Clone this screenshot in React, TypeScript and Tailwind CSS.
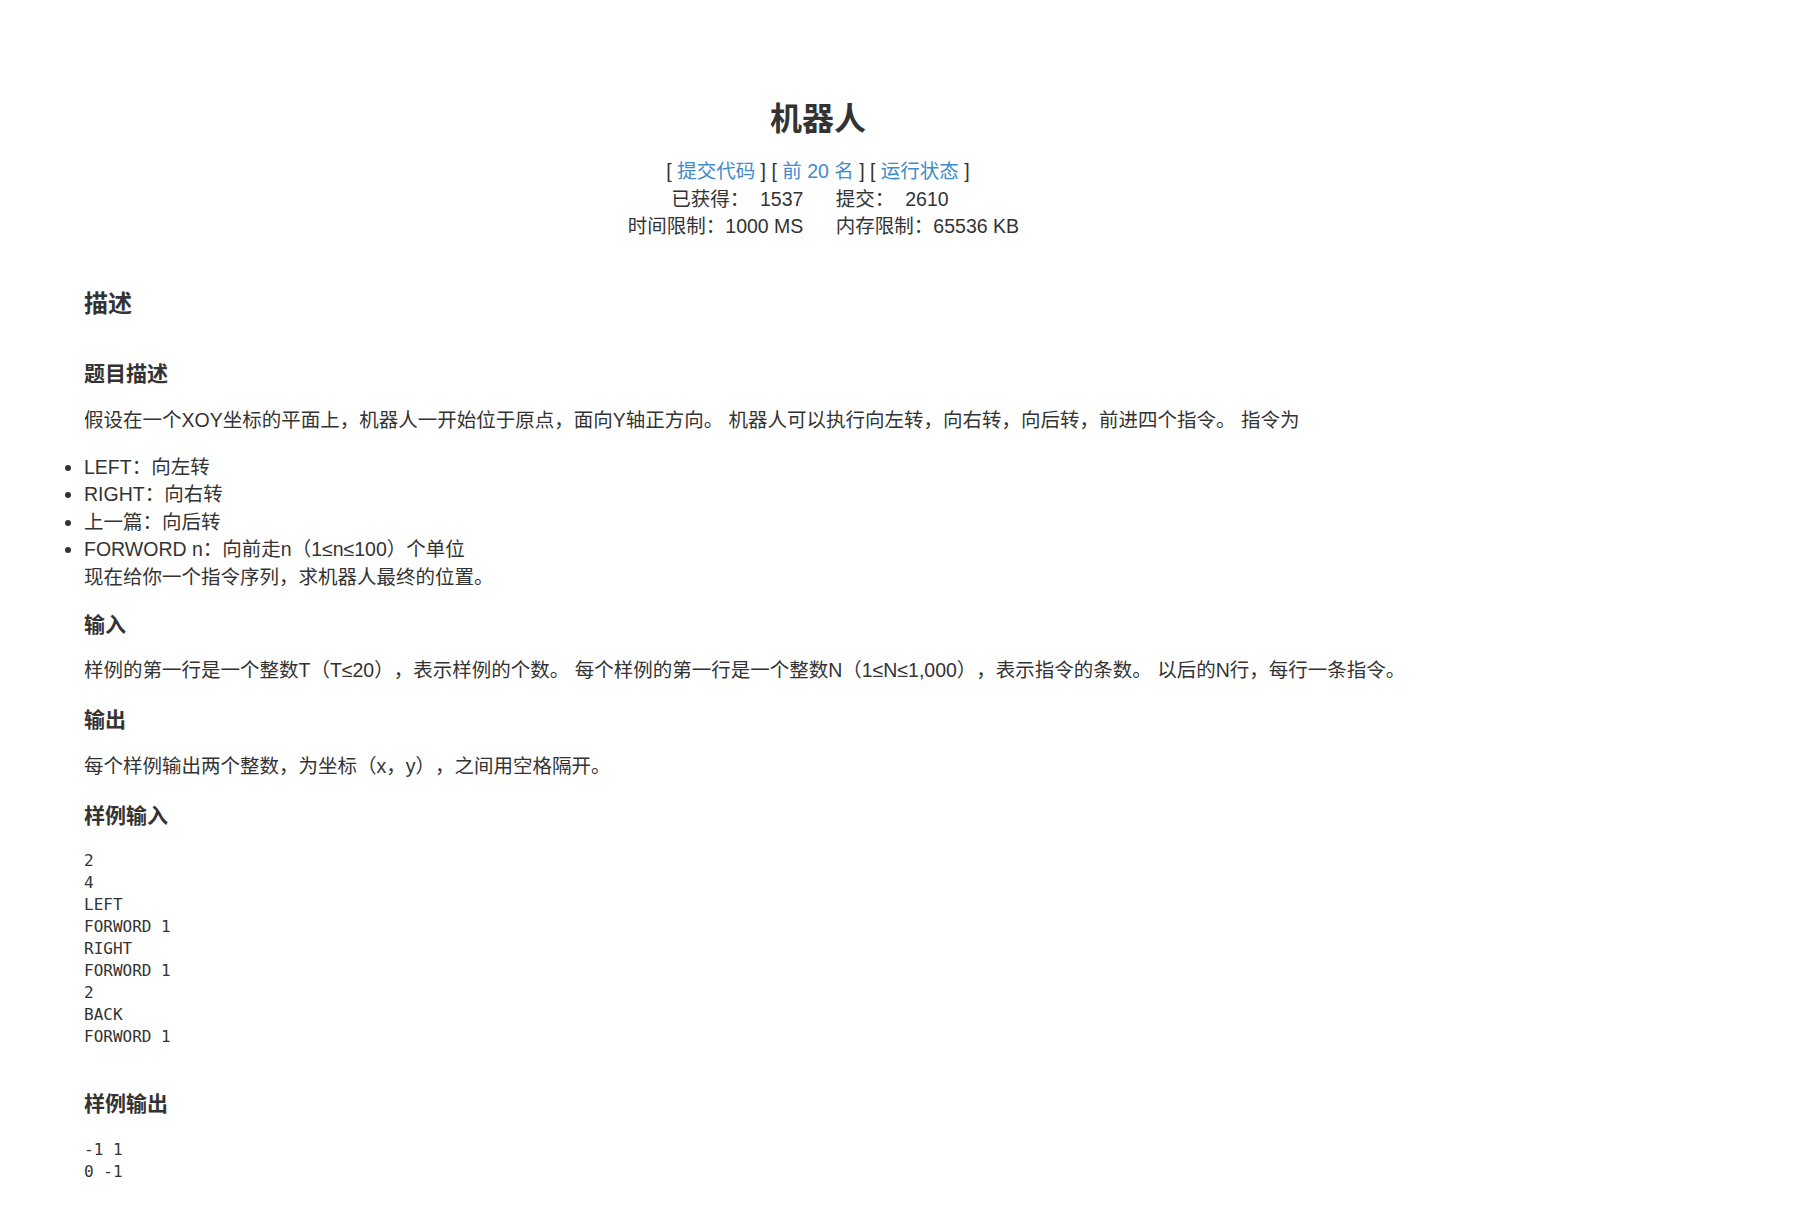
export default function App() {
  const sampleIn = ["2", "4", "LEFT", "FORWORD 1", "RIGHT", "FORWORD 1", "2", "BACK", "FORWORD 1"]
  const sampleOut = ["-1 1", "0 -1"]

  const sans = "font-['Liberation_Sans','Noto_Sans_CJK_SC',sans-serif]"
  const h4 = "text-[21px] font-bold leading-[28px] text-[#333]"
  const p = "text-[19.5px] leading-[27.5px] text-[#333]"
  const pre = "font-['DejaVu_Sans_Mono',monospace] text-[16px] leading-[22px] text-[#333] whitespace-pre"

  return (
    <div className={`min-h-screen bg-white pl-[84px] pt-[99px] [text-spacing-trim:space-all] ${sans}`}>
      <div className="w-[1468px]">
        <h1 className="text-center text-[32px] font-bold leading-[40px] text-[#333]">机器人</h1>

        <div className={`mt-[19px] text-center ${p}`}>
          <div>
            [ <a className="text-[#428bca]">提交代码</a> ] [ <a className="text-[#428bca]">前 20 名</a> ] [{" "}
            <a className="text-[#428bca]">运行状态</a> ]
          </div>
          <div className="whitespace-pre">已获得：  1537      提交：  2610   </div>
          <div className="whitespace-pre">  时间限制：1000 MS      内存限制：65536 KB</div>
        </div>

        <h3 className="mt-[47px] text-[24px] font-bold leading-[32px] text-[#333]">描述</h3>

        <h4 className={`mt-[40px] ${h4}`}>题目描述</h4>
        <p className={`mt-[19px] ${p}`}>
          假设在一个XOY坐标的平面上，机器人一开始位于原点，面向Y轴正方向。 机器人可以执行向左转，向右转，向后转，前进四个指令。 指令为
        </p>
        <ul className={`mt-[19.5px] list-disc ${p}`}>
          <li>LEFT：向左转</li>
          <li>RIGHT：向右转</li>
          <li>上一篇：向后转</li>
          <li>
            FORWORD n：向前走n（1≤n≤100）个单位
            <br />
            现在给你一个指令序列，求机器人最终的位置。
          </li>
        </ul>

        <h4 className={`mt-[20px] ${h4}`}>输入</h4>
        <p className={`mt-[18px] ${p}`}>
          样例的第一行是一个整数T（T≤20），表示样例的个数。 每个样例的第一行是一个整数N（1≤N≤1,000），表示指令的条数。 以后的N行，每行一条指令。
        </p>

        <h4 className={`mt-[21px] ${h4}`}>输出</h4>
        <p className={`mt-[19px] ${p}`}>每个样例输出两个整数，为坐标（x，y），之间用空格隔开。</p>

        <h4 className={`mt-[22px] ${h4}`}>样例输入</h4>
        <div className={`mt-[19.5px] ${pre}`}>
          {sampleIn.map((line, i) => (
            <div key={i}>{line}</div>
          ))}
        </div>

        <h4 className={`mt-[42px] ${h4}`}>样例输出</h4>
        <div className={`mt-[21px] ${pre}`}>
          {sampleOut.map((line, i) => (
            <div key={i}>{line}</div>
          ))}
        </div>
      </div>
    </div>
  )
}
